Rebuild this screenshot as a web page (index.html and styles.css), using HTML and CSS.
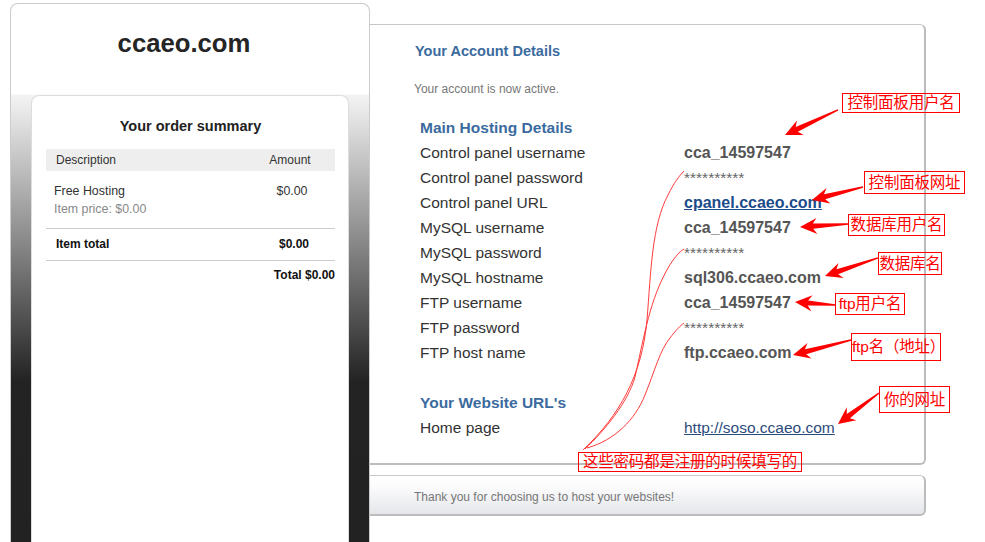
FILE: index.html
```html
<!DOCTYPE html>
<html>
<head>
<meta charset="utf-8">
<title>ccaeo.com - Account</title>
<link rel="stylesheet" href="styles.css">
</head>
<body>
<div class="page">
  <aside class="sidebar">
    <h1 class="brand">ccaeo.com</h1>
    <section class="summary">
      <h2 class="summary-title">Your order summary</h2>
      <div class="sum-head">
        <span class="c-desc">Description</span>
        <span class="c-amt">Amount</span>
      </div>
      <div class="sum-item">
        <div class="c-item">
          <div class="item-name">Free Hosting</div>
          <div class="item-price">Item price: $0.00</div>
        </div>
        <div class="c-amt">$0.00</div>
      </div>
      <div class="sum-total">
        <span class="c-desc">Item total</span>
        <span class="c-amt">$0.00</span>
      </div>
      <div class="sum-grand">Total $0.00</div>
    </section>
  </aside>

  <main class="main">
    <section class="details">
      <h3 class="details-title">Your Account Details</h3>
      <p class="details-note">Your account is now active.</p>
      <div class="info">
        <div class="info-head">Main Hosting Details</div>
        <div class="info-row"><span class="lbl">Control panel username</span><span class="val">cca_14597547</span></div>
        <div class="info-row"><span class="lbl">Control panel password</span><span class="pwd">**********</span></div>
        <div class="info-row"><span class="lbl">Control panel URL</span><a class="val link-bold" href="#">cpanel.ccaeo.com</a></div>
        <div class="info-row"><span class="lbl">MySQL username</span><span class="val">cca_14597547</span></div>
        <div class="info-row"><span class="lbl">MySQL password</span><span class="pwd">**********</span></div>
        <div class="info-row"><span class="lbl">MySQL hostname</span><span class="val">sql306.ccaeo.com</span></div>
        <div class="info-row"><span class="lbl">FTP username</span><span class="val">cca_14597547</span></div>
        <div class="info-row"><span class="lbl">FTP password</span><span class="pwd">**********</span></div>
        <div class="info-row"><span class="lbl">FTP host name</span><span class="val">ftp.ccaeo.com</span></div>
        <div class="info-row info-blank"></div>
        <div class="info-head">Your Website URL's</div>
        <div class="info-row"><span class="lbl">Home page</span><a class="link" href="#">http://soso.ccaeo.com</a></div>
      </div>
    </section>
    <footer class="thanks">Thank you for choosing us to host your websites!</footer>
  </main>
</div>

<div class="overlay">
  <svg class="marks" width="985" height="542" viewBox="0 0 985 542" xmlns="http://www.w3.org/2000/svg">
    <g fill="#ff0000">
      <polygon transform="translate(785,135) rotate(154.7)" points="0,0 -17,-8 -13,-2.6 -58.6,-0.7 -58.6,0.7 -13,2.6 -17,8"/>
      <polygon transform="translate(812,200) rotate(165.7)" points="0,0 -17,-8 -13,-2.6 -52.6,-0.7 -52.6,0.7 -13,2.6 -17,8"/>
      <polygon transform="translate(800,227) rotate(176.4)" points="0,0 -17,-8 -13,-2.6 -48.1,-0.7 -48.1,0.7 -13,2.6 -17,8"/>
      <polygon transform="translate(825,276) rotate(161.2)" points="0,0 -17,-8 -13,-2.6 -56,-0.7 -56,0.7 -13,2.6 -17,8"/>
      <polygon transform="translate(795,302) rotate(184.3)" points="0,0 -17,-8 -13,-2.6 -40.1,-0.7 -40.1,0.7 -13,2.6 -17,8"/>
      <polygon transform="translate(793,355) rotate(165.5)" points="0,0 -17,-8 -13,-2.6 -59.9,-0.7 -59.9,0.7 -13,2.6 -17,8"/>
      <polygon transform="translate(838,424) rotate(142.9)" points="0,0 -17,-8 -13,-2.6 -51.4,-0.7 -51.4,0.7 -13,2.6 -17,8"/>
    </g>
    <g fill="none" stroke="#ff3b3b" stroke-width="1">
      <path d="M583,450 C620,415 642,375 647,320 C651,270 652,225 668,195 C674,183 679,176 684,171"/>
      <path d="M585,449 C605,430 628,402 635,377 C645,332 650,300 668,268 C674,258 679,252 684,249"/>
      <path d="M587,448 C615,440 635,420 645,395 C655,370 660,350 670,338 C676,330 680,326 684,323"/>
    </g>
  </svg>
  <div class="note n1">控制面板用户名</div>
  <div class="note n2">控制面板网址</div>
  <div class="note n3">数据库用户名</div>
  <div class="note n4">数据库名</div>
  <div class="note n5">ftp用户名</div>
  <div class="note n6">ftp名（地址）</div>
  <div class="note n7">你的网址</div>
  <div class="note n8">这些密码都是注册的时候填写的</div>
</div>
</body>
</html>
```

FILE: styles.css
```css
* { box-sizing: border-box; }

html, body {
  margin: 0;
  padding: 0;
}

body {
  width: 985px;
  height: 542px;
  overflow: hidden;
  position: relative;
  background: #ffffff;
  font-family: "Liberation Sans", Arial, sans-serif;
  color: #333333;
}

.page {
  display: flex;
  align-items: flex-start;
  padding: 3px 0 0 10px;
}

/* ---------- left column ---------- */
.sidebar {
  width: 360px;
  height: 539px;
  flex: none;
  border: 1px solid #cccccc;
  border-bottom: 0;
  border-radius: 8px 8px 0 0;
  padding: 0 20px;
  background: linear-gradient(to bottom, #ffffff 0, #ffffff 90px, #f4f4f4 91px, #232323 377px, #222222 100%);
  position: relative;
  z-index: 1;
}

.brand {
  margin: 22px 0 0;
  padding-right: 12px;
  font-size: 25.7px;
  line-height: 34px;
  font-weight: bold;
  color: #252525;
  text-align: center;
}

.summary {
  margin-top: 35px;
  height: 448px;
  background: #ffffff;
  border: 1px solid #dddddd;
  border-bottom: 0;
  border-radius: 8px 8px 0 0;
  padding: 21px 13px 0 14px;
}

.summary-title {
  margin: 0;
  font-size: 14.5px;
  line-height: 18px;
  font-weight: bold;
  text-align: center;
  color: #222222;
}

.sum-head {
  margin-top: 14px;
  height: 22px;
  background: #eeeeee;
  display: grid;
  grid-template-columns: 1fr 90px;
  align-items: center;
  font-size: 12px;
  color: #333333;
}

.c-desc { padding-left: 10px; }
.c-amt { text-align: center; }

.sum-item {
  display: grid;
  grid-template-columns: 1fr 90px;
  padding: 11px 0 10px 8px;
  border-bottom: 1px solid #cccccc;
  font-size: 12.4px;
  line-height: 18px;
  color: #333333;
}

.sum-item .c-amt { padding-left: 4px; }

.item-price { color: #888888; }

.sum-total {
  display: grid;
  grid-template-columns: 1fr 90px;
  padding: 6px 0 7px;
  border-bottom: 1px solid #cccccc;
  font-size: 12px;
  line-height: 18px;
  font-weight: bold;
  color: #111111;
}

.sum-total .c-amt { padding-left: 8px; }

.sum-grand {
  padding-top: 5px;
  text-align: right;
  font-size: 12px;
  line-height: 18px;
  font-weight: bold;
  color: #111111;
}

/* ---------- right column ---------- */
.main {
  width: 556px;
  flex: none;
  margin-top: 21px;
  display: flex;
  flex-direction: column;
  gap: 10px;
}

.details {
  height: 441px;
  border-top: 1px solid #c8c8c8;
  border-right: 2px solid #bcbcbc;
  border-bottom: 2px solid #bcbcbc;
  border-radius: 0 6px 6px 0;
  padding: 16px 0 0 45px;
  background: #ffffff;
}

.details-title {
  margin: 0;
  font-size: 14.5px;
  line-height: 20px;
  font-weight: bold;
  color: #3b6b9e;
}

.details-note {
  margin: 20px 0 0 -1px;
  font-size: 12px;
  line-height: 16px;
  color: #777777;
}

.info {
  margin-top: 17.5px;
  padding-left: 5px;
}

.info-head {
  height: 25px;
  line-height: 25px;
  font-size: 15.5px;
  font-weight: bold;
  color: #3b6b9e;
}

.info-row {
  display: grid;
  grid-template-columns: 264px 1fr;
  height: 25px;
  line-height: 25px;
  align-items: center;
}

.lbl {
  font-size: 15.5px;
  color: #333333;
}

.val {
  font-size: 16px;
  font-weight: bold;
  color: #555555;
}

.pwd {
  font-size: 15.5px;
  color: #666666;
}

.link-bold {
  color: #1d4b8a;
  text-decoration: underline;
  justify-self: start;
}

.link {
  font-size: 15.5px;
  color: #2b4b7b;
  text-decoration: underline;
  justify-self: start;
}

.thanks {
  height: 41px;
  border-top: 1px solid #c8c8c8;
  border-right: 2px solid #bcbcbc;
  border-bottom: 2px solid #bcbcbc;
  border-radius: 0 6px 6px 0;
  padding: 3px 0 0 44px;
  display: flex;
  align-items: center;
  font-size: 12px;
  color: #777777;
  background: linear-gradient(to bottom, #ffffff 0%, #fbfbfc 30%, #e4e6e9 100%);
}

/* ---------- annotations overlay ---------- */
.overlay {
  position: absolute;
  left: 0;
  top: 0;
  width: 985px;
  height: 542px;
  pointer-events: none;
  z-index: 5;
}

.marks {
  position: absolute;
  left: 0;
  top: 0;
}

.note {
  position: absolute;
  border: 1px solid #ff0000;
  color: #ff0000;
  font-family: "Liberation Sans", "Noto Sans CJK SC", sans-serif;
  font-size: 15.5px;
  line-height: 1;
  white-space: nowrap;
  display: flex;
  align-items: center;
  justify-content: center;
  letter-spacing: -0.2px;
}

.n1 { left: 842px; top: 93px; width: 118px; height: 20px; }
.n2 { left: 864px; top: 171px; width: 101px; height: 23px; }
.n3 { left: 848px; top: 214px; width: 97px; height: 22px; }
.n4 { left: 878px; top: 252px; width: 64px; height: 23px; }
.n5 { left: 835px; top: 293px; width: 70px; height: 22px; }
.n6 { left: 851px; top: 333px; width: 90px; height: 28px; justify-content: flex-start; }
.n7 { left: 879px; top: 386px; width: 71px; height: 27px; }
.n8 { left: 578px; top: 452px; width: 224px; height: 20px; }
```
